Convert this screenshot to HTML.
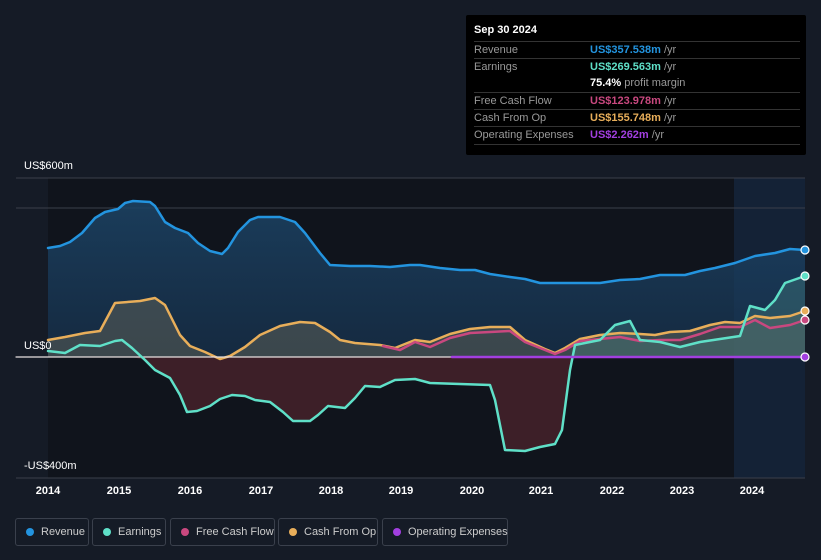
<!DOCTYPE html>
<html><head><meta charset="utf-8"><style>
*{margin:0;padding:0;box-sizing:border-box}
body{width:821px;height:560px;background:#151b26;font-family:"Liberation Sans",sans-serif;position:relative;overflow:hidden;color:#fff}
.tt{position:absolute;left:466px;top:15px;width:340px;height:140px;background:#000;border-radius:2px;font-size:11px}
.tt .h{position:absolute;left:8px;top:9px;font-weight:bold;font-size:11px}
.row{position:absolute;left:8px;width:326px;border-top:1px solid #333;height:17px;line-height:16px;color:#999}
.row b{position:absolute;left:116px;font-weight:bold}
.row span{color:#999;font-weight:normal}
.lbl{position:absolute;font-size:11px;color:#fff}
.yr{position:absolute;top:485px;font-size:11px;font-weight:bold;color:#fff;transform:translateX(-50%)}
.lg{position:absolute;top:518px;height:28px;border:1px solid #3a404c;border-radius:3px;font-size:11px;color:#ccc;line-height:26px;white-space:nowrap}
.lg i{position:absolute;left:10px;top:9px;width:8px;height:8px;border-radius:50%}
.lg s{position:absolute;left:25px;text-decoration:none}
</style></head><body>
<svg width="821" height="560" style="position:absolute;left:0;top:0">
<defs>
<linearGradient id="bg" x1="0" y1="0" x2="0" y2="1"><stop offset="0" stop-color="#1c4466" stop-opacity=".85"/><stop offset="1" stop-color="#173350" stop-opacity=".7"/></linearGradient>
</defs>
<rect x="48" y="178" width="757" height="300" fill="#10141c"/>
<rect x="734" y="178" width="71" height="300" fill="#142236"/>
<line x1="16" y1="178" x2="805" y2="178" stroke="#3a3f4a"/>
<line x1="16" y1="208" x2="805" y2="208" stroke="#3a3f4a"/>
<polygon fill="url(#bg)" points="48,357 48,248 60,246 70,242 82,233 95,218 105,212 118,209 125,203 133,201 150,202 155,206 165,222 175,228 188,233 198,243 210,251 222,254 228,248 238,232 250,220 258,217 280,217 295,222 305,233 320,253 330,265 350,266 370,266 390,267 410,265 420,265 440,268 460,270 475,270 490,274 510,277 525,279 540,283 560,283 580,283 600,283 620,280 640,279 660,275 685,275 700,271 715,268 735,263 755,256 775,253 790,249 805,250 805,357"/>
<polygon fill="#6b6a5a" fill-opacity=".45" points="48,357 48,340 65,337 85,333 100,331 115,303 140,301 155,298 165,305 180,335 190,346 205,352 220,359 230,356 245,347 260,335 280,326 300,322 315,323 330,332 340,340 355,343 380,345 395,348 415,340 430,342 450,334 470,329 490,327 510,327 525,340 545,349 555,353 565,348 580,339 600,335 620,333 640,334 655,335 670,332 690,331 710,325 725,322 740,323 755,316 770,318 790,316 805,311 805,357"/>
<polygon fill="#3d1f28" points="132,357 145,360 155,370 170,378 180,395 187,412 197,411 210,406 220,399 232,395 245,396 255,400 270,402 283,412 293,421 310,421 318,415 328,406 345,408 355,398 365,386 380,387 395,380 415,379 430,383 460,384 490,385 495,400 505,450 525,451 540,447 555,444 562,430 570,370 573,357"/>
<polygon fill="#4a8a88" fill-opacity=".35" points="573,357 575,345 590,342 600,340 615,325 630,321 640,340 660,342 680,347 700,342 720,339 740,336 750,306 765,310 775,300 785,283 805,276 805,357"/>
<g fill="none" stroke-width="2.5" stroke-linejoin="round" stroke-linecap="round">
<polyline stroke="#2394df" points="48,248 60,246 70,242 82,233 95,218 105,212 118,209 125,203 133,201 150,202 155,206 165,222 175,228 188,233 198,243 210,251 222,254 228,248 238,232 250,220 258,217 280,217 295,222 305,233 320,253 330,265 350,266 370,266 390,267 410,265 420,265 440,268 460,270 475,270 490,274 510,277 525,279 540,283 560,283 580,283 600,283 620,280 640,279 660,275 685,275 700,271 715,268 735,263 755,256 775,253 790,249 805,250"/>
<polyline stroke="#e8ae5a" points="48,340 65,337 85,333 100,331 115,303 140,301 155,298 165,305 180,335 190,346 205,352 220,359 230,356 245,347 260,335 280,326 300,322 315,323 330,332 340,340 355,343 380,345 395,348 415,340 430,342 450,334 470,329 490,327 510,327 525,340 545,349 555,353 565,348 580,339 600,335 620,333 640,334 655,335 670,332 690,331 710,325 725,322 740,323 755,316 770,318 790,316 805,311"/>
<polyline stroke="#c9487f" points="383,346 400,350 415,342 430,347 450,338 470,333 490,332 510,331 525,342 545,350 555,354 565,350 580,341 600,339 620,337 640,341 660,340 680,340 700,334 720,327 740,327 755,320 770,328 790,325 805,320"/>
<line x1="16" y1="357" x2="805" y2="357" stroke="#e8e0e0" stroke-width="1.2"/>
<polyline stroke="#5fe0c8" points="48,351 65,353 80,345 100,346 115,341 122,340 132,348 145,360 155,370 170,378 180,395 187,412 197,411 210,406 220,399 232,395 245,396 255,400 270,402 283,412 293,421 310,421 318,415 328,406 345,408 355,398 365,386 380,387 395,380 415,379 430,383 460,384 490,385 495,400 505,450 525,451 540,447 555,444 562,430 570,370 575,345 590,342 600,340 615,325 630,321 640,340 660,342 680,347 700,342 720,339 740,336 750,306 765,310 775,300 785,283 805,276"/>
<line x1="452" y1="357" x2="805" y2="357" stroke="#a23fe0"/>
</g>
<g stroke="#fff" stroke-width="1.2">
<circle cx="805" cy="250" r="4" fill="#2394df"/><circle cx="805" cy="276" r="4" fill="#5fe0c8"/>
<circle cx="805" cy="311" r="4" fill="#e8ae5a"/><circle cx="805" cy="320" r="4" fill="#c9487f"/>
<circle cx="805" cy="357" r="4" fill="#a23fe0"/></g>
<line x1="16" y1="478" x2="805" y2="478" stroke="#3a3f4a"/>
</svg>
<div class="lbl" style="left:24px;top:160px">US$600m</div>
<div class="lbl" style="left:24px;top:340px">US$0</div>
<div class="lbl" style="left:24px;top:460px">-US$400m</div>
<div class="yr" style="left:48px">2014</div><div class="yr" style="left:119px">2015</div><div class="yr" style="left:190px">2016</div><div class="yr" style="left:261px">2017</div><div class="yr" style="left:331px">2018</div><div class="yr" style="left:401px">2019</div><div class="yr" style="left:472px">2020</div><div class="yr" style="left:541px">2021</div><div class="yr" style="left:612px">2022</div><div class="yr" style="left:682px">2023</div><div class="yr" style="left:752px">2024</div>
<div class="tt"><div class="h">Sep 30 2024</div>
<div class="row" style="top:26px">Revenue<b style="color:#2394df">US$357.538m <span>/yr</span></b></div>
<div class="row" style="top:43px">Earnings<b style="color:#5fe0c8">US$269.563m <span>/yr</span></b></div>
<div class="row" style="top:60px;border-top:none"><b style="color:#fff">75.4% <span>profit margin</span></b></div>
<div class="row" style="top:77px">Free Cash Flow<b style="color:#c9487f">US$123.978m <span>/yr</span></b></div>
<div class="row" style="top:94px">Cash From Op<b style="color:#e8ae5a">US$155.748m <span>/yr</span></b></div>
<div class="row" style="top:111px">Operating Expenses<b style="color:#a23fe0">US$2.262m <span>/yr</span></b></div>
<div class="row" style="top:129px"></div>
</div>
<div class="lg" style="left:15px;width:74px"><i style="background:#2394df"></i><s>Revenue</s></div>
<div class="lg" style="left:92px;width:74px"><i style="background:#5fe0c8"></i><s>Earnings</s></div>
<div class="lg" style="left:170px;width:105px"><i style="background:#c9487f"></i><s>Free Cash Flow</s></div>
<div class="lg" style="left:278px;width:100px"><i style="background:#e8ae5a"></i><s>Cash From Op</s></div>
<div class="lg" style="left:382px;width:126px"><i style="background:#a23fe0"></i><s>Operating Expenses</s></div>
</body></html>
